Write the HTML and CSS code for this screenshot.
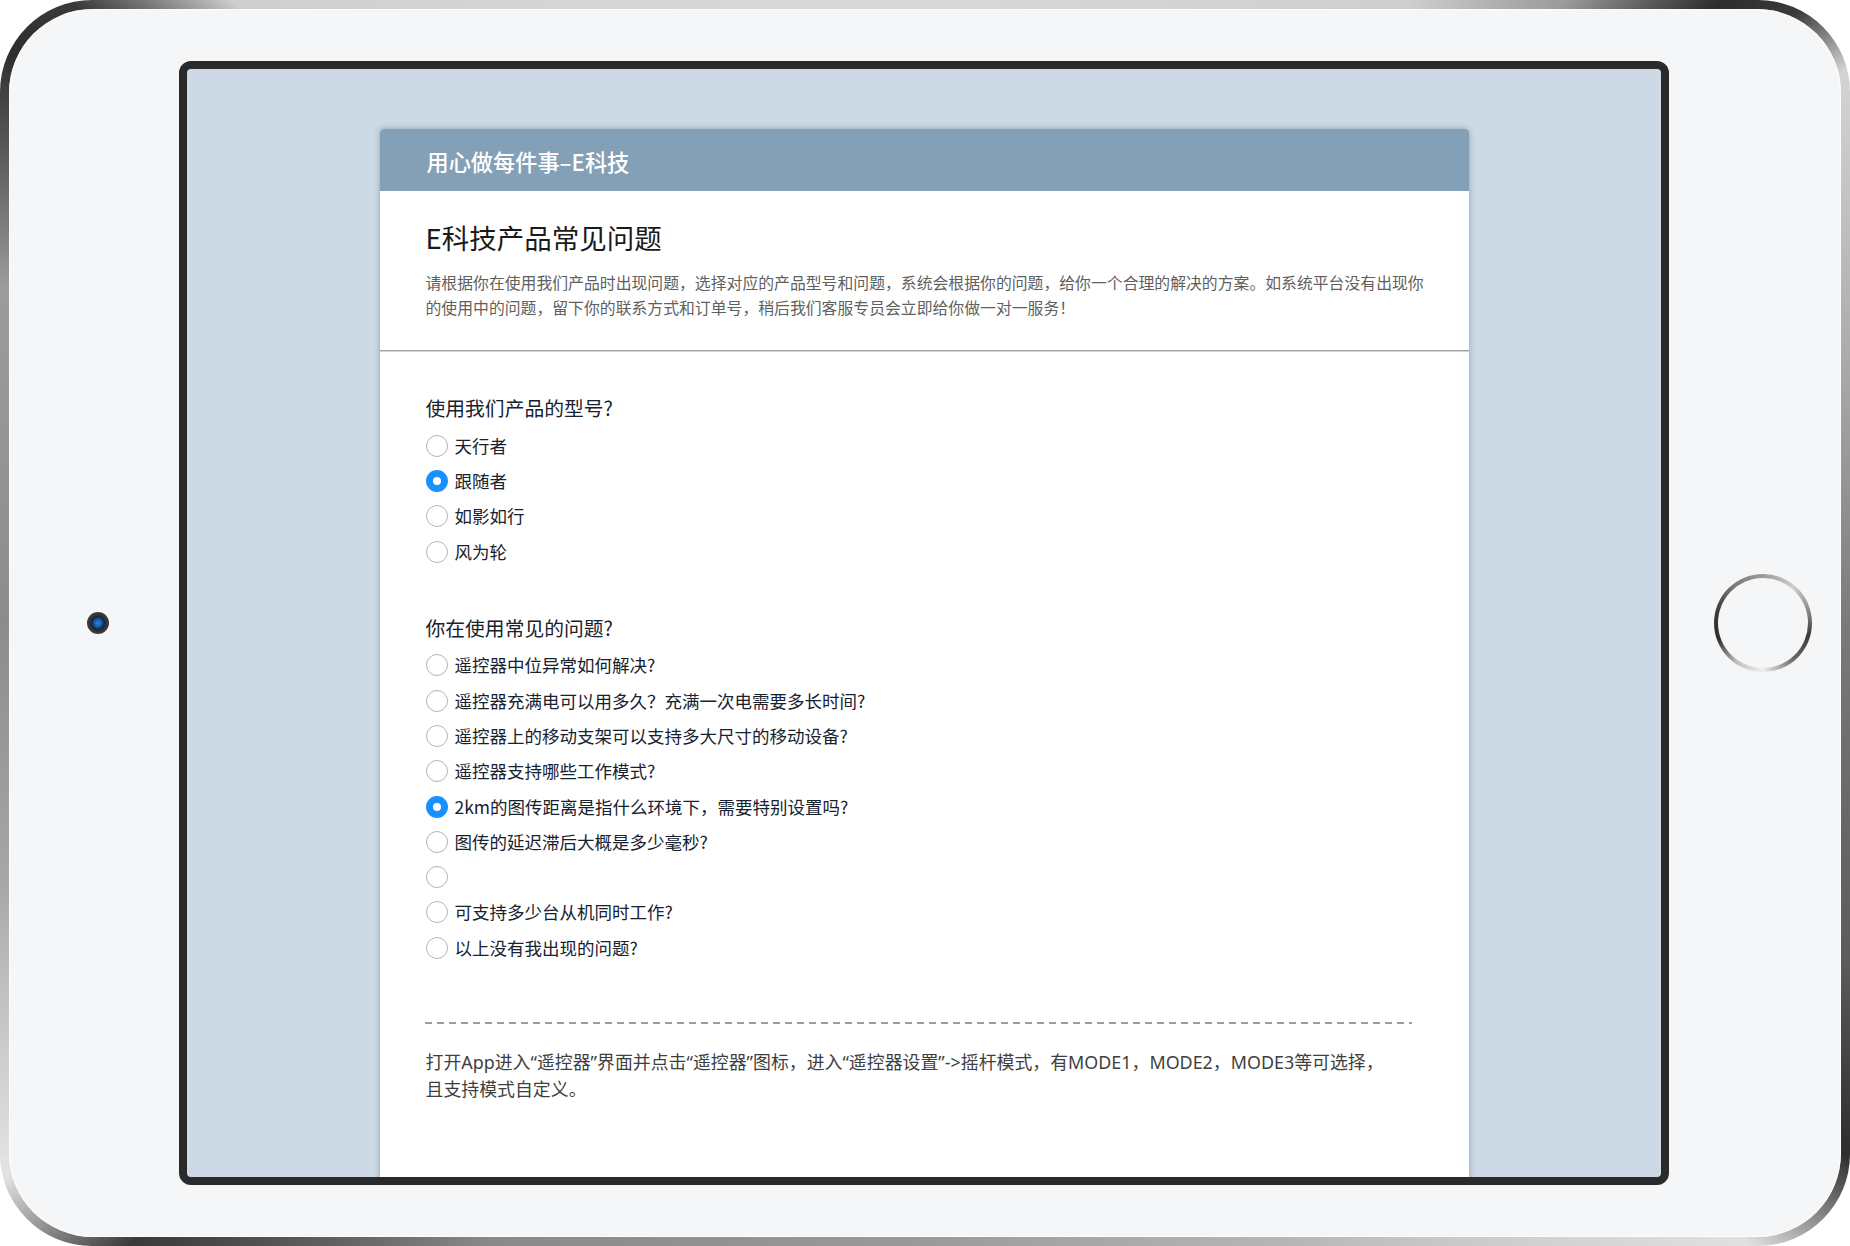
FILE: index.html
```html
<!DOCTYPE html>
<html lang="zh-CN">
<head>
<meta charset="utf-8">
<title>E科技产品常见问题</title>
<link rel="stylesheet" href="styles.css">
</head>
<body>
<div class="device">
  <div class="bezel">
    <div class="side side-left"><div class="camera"></div></div>
    <div class="screen">
      <div class="card">
        <div class="card-header">用心做每件事–E科技</div>
        <div class="intro">
          <h1 class="title">E科技产品常见问题</h1>
          <p class="desc">请根据你在使用我们产品时出现问题，选择对应的产品型号和问题，系统会根据你的问题，给你一个合理的解决的方案。如系统平台没有出现你的使用中的问题，留下你的联系方式和订单号，稍后我们客服专员会立即给你做一对一服务！</p>
        </div>
        <div class="content">
          <div class="q-group">
            <div class="q-title">使用我们产品的型号?</div>
            <div class="options">
              <div class="option"><span class="radio"></span><span class="label">天行者</span></div>
              <div class="option"><span class="radio checked"></span><span class="label">跟随者</span></div>
              <div class="option"><span class="radio"></span><span class="label">如影如行</span></div>
              <div class="option"><span class="radio"></span><span class="label">风为轮</span></div>
            </div>
          </div>
          <div class="q-group">
            <div class="q-title">你在使用常见的问题?</div>
            <div class="options">
              <div class="option"><span class="radio"></span><span class="label">遥控器中位异常如何解决?</span></div>
              <div class="option"><span class="radio"></span><span class="label">遥控器充满电可以用多久？充满一次电需要多长时间?</span></div>
              <div class="option"><span class="radio"></span><span class="label">遥控器上的移动支架可以支持多大尺寸的移动设备?</span></div>
              <div class="option"><span class="radio"></span><span class="label">遥控器支持哪些工作模式?</span></div>
              <div class="option"><span class="radio checked"></span><span class="label">2km的图传距离是指什么环境下，需要特别设置吗?</span></div>
              <div class="option"><span class="radio"></span><span class="label">图传的延迟滞后大概是多少毫秒?</span></div>
              <div class="option"><span class="radio"></span><span class="label"></span></div>
              <div class="option"><span class="radio"></span><span class="label">可支持多少台从机同时工作?</span></div>
              <div class="option"><span class="radio"></span><span class="label">以上没有我出现的问题?</span></div>
            </div>
          </div>
          <div class="divider"></div>
          <p class="answer">打开App进入“遥控器”界面并点击“遥控器”图标，进入“遥控器设置”-&gt;摇杆模式，有MODE1，MODE2，MODE3等可选择，<br>且支持模式自定义。</p>
        </div>
      </div>
    </div>
    <div class="side side-right"><div class="home"><div class="home-inner"></div></div></div>
  </div>
</div>
</body>
</html>
```

FILE: styles.css
```css
html, body {
  margin: 0;
  padding: 0;
  background: #ffffff;
  overflow: hidden;
}

body {
  font-family: "Noto Sans CJK SC", "Noto Sans", sans-serif;
}

.device {
  width: 1850px;
  height: 1246px;
  box-sizing: border-box;
  padding: 9px;
  border-radius: 92px;
  background: conic-gradient(from 0deg,
    #d9d9d9 0deg, #cfcfcf 38deg, #9a9a9a 46deg, #2e2e2e 52deg, #3a3a3a 55deg, #d4d4d4 59deg,
    #a8a8a8 75deg, #7a7a7a 90deg, #5c5c5c 110deg, #2e2e2e 120deg, #e0e0e0 127deg,
    #b5b5b5 150deg, #9a9a9a 180deg, #8a8a8a 215deg, #3a3a3a 232deg, #e4e4e4 239deg,
    #a5a5a5 255deg, #8c8c8c 270deg, #9c9c9c 290deg, #2e2e2e 302deg, #3a3a3a 306deg, #cfcfcf 312deg,
    #d6d6d6 330deg, #d9d9d9 360deg);
}

.bezel {
  height: 100%;
  border-radius: 84px;
  background: #f5f6f8;
  display: flex;
  align-items: center;
  box-shadow: inset 0 0 1px 1px rgba(255, 255, 255, 0.8);
}

.side {
  height: 100%;
  display: flex;
  align-items: center;
  justify-content: center;
  box-sizing: border-box;
}

.side-left {
  width: 170px;
  padding-left: 8px;
}

.side-right {
  width: 172px;
  padding-left: 16px;
}

.camera {
  width: 22px;
  height: 22px;
  border-radius: 50%;
  background: radial-gradient(circle at 50% 50%, #2a86dc 0, #1766b8 3px, #0d4a8c 5px, #1c2430 6px, #2f3236 8px, #3c3f43 11px);
}

.home {
  width: 98px;
  height: 98px;
  border-radius: 50%;
  box-sizing: border-box;
  padding: 4px;
  background: conic-gradient(from 0deg,
    #9a9a9a 0deg, #cfcfcf 40deg, #8a8a8a 75deg, #3a3a3a 105deg, #6a6a6a 140deg,
    #f0f0f0 180deg, #bdbdbd 215deg, #2e2e2e 250deg, #3a3a3a 285deg, #777 320deg, #9a9a9a 360deg);
}

.home-inner {
  width: 100%;
  height: 100%;
  border-radius: 50%;
  background: #f5f6f8;
}

.screen {
  width: 1490px;
  height: 1124px;
  box-sizing: border-box;
  border: 8px solid #2a2a2a;
  border-radius: 12px;
  background: #cddae5;
  overflow: hidden;
  padding-top: 60px;
  display: flex;
  justify-content: center;
  align-items: flex-start;
}

.card {
  width: 1089px;
  background: #ffffff;
  border-radius: 4px 4px 0 0;
  box-shadow: 0 0 6px rgba(40, 60, 85, 0.35);
  padding-bottom: 200px;
}

.card-header {
  height: 62px;
  box-sizing: border-box;
  padding: 3px 0 0 47px;
  line-height: 59px;
  background: #84a0b6;
  color: #ffffff;
  font-size: 22.2px;
  font-weight: 500;
  border-radius: 4px 4px 0 0;
}

.intro {
  padding: 28px 40px 30px 46px;
  border-bottom: 1px solid #9e9e9e;
  box-shadow: 0 1px 0 #d6d6d6;
}

.title {
  margin: 0;
  font-size: 27.5px;
  font-weight: 400;
  line-height: 36px;
  color: #1a1a1a;
}

.desc {
  margin: 14.5px 0 0 0;
  font-size: 15.85px;
  line-height: 25px;
  color: #5f5f5f;
}

.content {
  padding: 43.5px 46px 0 46px;
}

.q-group + .q-group {
  margin-top: 44.5px;
}

.q-title {
  font-size: 19.8px;
  line-height: 28px;
  color: #17222f;
}

.options {
  margin-top: 6px;
}

.option {
  height: 35.3px;
  display: flex;
  align-items: center;
  gap: 7px;
}

.radio {
  flex: none;
  width: 22px;
  height: 22px;
  box-sizing: border-box;
  border-radius: 50%;
  border: 1px solid #adb5c0;
  background: #ffffff;
}

.radio.checked {
  border: 7px solid #1890ff;
}

.label {
  font-size: 17.5px;
  line-height: 24px;
  color: #17222f;
}

.divider {
  margin-top: 57px;
  margin-left: -1px;
  width: 987px;
  height: 2px;
  background-image: repeating-linear-gradient(90deg, #9c9c9c 0, #9c9c9c 7px, transparent 7px, transparent 12px);
}

.answer {
  margin: 24.5px 0 0 0;
  font-family: "Noto Sans", "Noto Sans CJK SC", sans-serif;
  font-size: 17.9px;
  line-height: 27px;
  color: #3f3f3f;
}
```
